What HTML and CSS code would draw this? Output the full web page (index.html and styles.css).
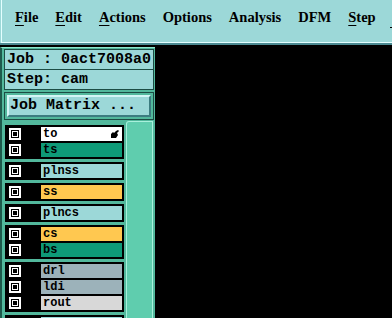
FILE: index.html
```html
<!DOCTYPE html>
<html lang="en">
<head>
  <meta charset="UTF-8">
  <title>Job Editor</title>
  <link rel="stylesheet" href="styles.css">
</head>
<body>
  <div class="menubar">
    <div class="menu">
      <span class="menu-item"><u>F</u>ile</span>
      <span class="menu-item"><u>E</u>dit</span>
      <span class="menu-item"><u>A</u>ctions</span>
      <span class="menu-item">Options</span>
      <span class="menu-item">Analysis</span>
      <span class="menu-item">DFM</span>
      <span class="menu-item"><u>S</u>tep</span>
      <span class="menu-cut"></span>
    </div>
  </div>

  <div class="main">
    <div class="panel">
      <div class="info">Job : 0act7008a0</div>
      <div class="info info-step">Step: cam</div>
      <div class="matrix-frame">
        <div class="matrix-btn">Job Matrix ...</div>
      </div>

      <div class="list-area">
        <div class="layers">
          <div class="group">
            <div class="row"><span class="check"></span><span class="label white">to
              <svg class="hand" width="8" height="8" viewBox="0 0 8 8"><path d="M0 8 L0 4 L2 2 L3 3 L5 1 L7 0 L8 1 L6 3 L7 5 L5 8 Z" fill="#000"/></svg></span></div>
            <div class="row"><span class="check"></span><span class="label green">ts</span></div>
          </div>
          <div class="group">
            <div class="row"><span class="check"></span><span class="label cyan">plnss</span></div>
          </div>
          <div class="group">
            <div class="row"><span class="check"></span><span class="label orange">ss</span></div>
          </div>
          <div class="group">
            <div class="row"><span class="check"></span><span class="label cyan">plncs</span></div>
          </div>
          <div class="group">
            <div class="row"><span class="check"></span><span class="label orange">cs</span></div>
            <div class="row"><span class="check"></span><span class="label green">bs</span></div>
          </div>
          <div class="group">
            <div class="row"><span class="check"></span><span class="label slate">drl</span></div>
            <div class="row"><span class="check"></span><span class="label slate">ldi</span></div>
            <div class="row"><span class="check"></span><span class="label grey">rout</span></div>
          </div>
          <div class="group">
            <div class="row"><span class="check"></span><span class="label cyan"></span></div>
          </div>
        </div>
        <div class="scrollbar"></div>
      </div>
    </div>
    <div class="canvas"></div>
  </div>
</body>
</html>
```

FILE: styles.css
```css
/* General */
body {
  margin: 0;
  padding: 0;
  background: #000;
  height: 318px;
  overflow: hidden;
}

/* Menu bar */
.menubar {
  height: 45px;
  box-sizing: border-box;
  background: #9cd8d8;
  border-bottom: 2px solid #4c8a92;
}

.menu {
  height: 43px;
  box-sizing: border-box;
  margin-left: 1px;
  border-left: 1px solid #e4ffff;
  border-bottom: 1px solid #e4ffff;
  display: flex;
  gap: 17px;
  padding: 10px 0 0 13px;
  font-family: "Liberation Serif", serif;
  font-weight: bold;
  font-size: 14.5px;
  line-height: 15px;
  color: #000;
  white-space: nowrap;
  overflow: hidden;
}

.menu-item u {
  text-underline-offset: 3px;
}

.menu-cut {
  width: 8px;
  height: 17px;
  flex: none;
  margin-left: -3px;
  border-bottom: 1px solid #000;
}

/* Main area */
.main {
  display: flex;
  margin-top: 2px;
  height: 271px;
}

.panel {
  width: 155px;
  flex: none;
  box-sizing: border-box;
  background: #52b89c;
  border-left: 2px solid #1e5a4c;
  border-top: 1px solid #90e8d0;
  padding: 1px 1px 0 2px;
  display: flex;
  flex-direction: column;
}

.info {
  height: 21px;
  box-sizing: border-box;
  border: 1px solid #1c4c44;
  background: #9cd8d8;
  padding: 1px 0 0 2px;
  font-family: "Liberation Mono", monospace;
  font-weight: bold;
  font-size: 15px;
  line-height: 18px;
  color: #000;
  white-space: nowrap;
}

.info-step {
  margin-top: -1px;
}

.matrix-frame {
  margin-top: 2px;
  height: 28px;
  box-sizing: border-box;
  border: 1px solid #1c4c44;
  padding: 2px;
}

.matrix-btn {
  height: 22px;
  box-sizing: border-box;
  background: #9cd8d8;
  border-top: 2px solid #d4f6f6;
  border-left: 2px solid #d4f6f6;
  border-bottom: 2px solid #3c7c80;
  border-right: 2px solid #3c7c80;
  padding-left: 1px;
  font-family: "Liberation Mono", monospace;
  font-weight: bold;
  font-size: 15px;
  line-height: 18px;
  color: #000;
  white-space: nowrap;
}

/* Layer list */
.list-area {
  flex: 1;
  display: flex;
  margin-top: 1px;
  min-height: 0;
}

.layers {
  width: 119px;
  padding: 4px 0 0 1px;
  display: flex;
  flex-direction: column;
  gap: 3px;
  overflow: hidden;
}

.group {
  flex: none;
  background: #000;
  padding: 1px 0;
}

.row {
  height: 16px;
  display: flex;
  align-items: center;
}

.check {
  width: 12px;
  height: 12px;
  box-sizing: border-box;
  margin-left: 4px;
  border: 2px solid #fff;
  background: #000;
  padding: 1px;
}

.check::after {
  content: "";
  display: block;
  width: 6px;
  height: 6px;
  box-sizing: border-box;
  border: 1px solid #fff;
}

.label {
  position: relative;
  width: 81px;
  height: 14px;
  margin-left: 20px;
  padding-left: 2px;
  box-sizing: border-box;
  font-family: "Liberation Mono", monospace;
  font-weight: bold;
  font-size: 12px;
  line-height: 14px;
  color: #000;
}

.hand {
  position: absolute;
  right: 3px;
  top: 3px;
}

.white { background: #fff; }
.green { background: #0e9a78; }
.cyan { background: #9cd8d8; }
.orange { background: #ffc850; }
.slate { background: #9cb2ba; }
.grey { background: #d8d8d8; }

.scrollbar {
  width: 27px;
  margin-left: 2px;
  box-sizing: border-box;
  background: #5fcdae;
  border-left: 1px solid #a8f0dc;
  border-top: 1px solid #a8f0dc;
  border-right: 1px solid #a8f0dc;
  border-top-left-radius: 3px;
}

.canvas {
  flex: 1;
  background: #000;
}
```
